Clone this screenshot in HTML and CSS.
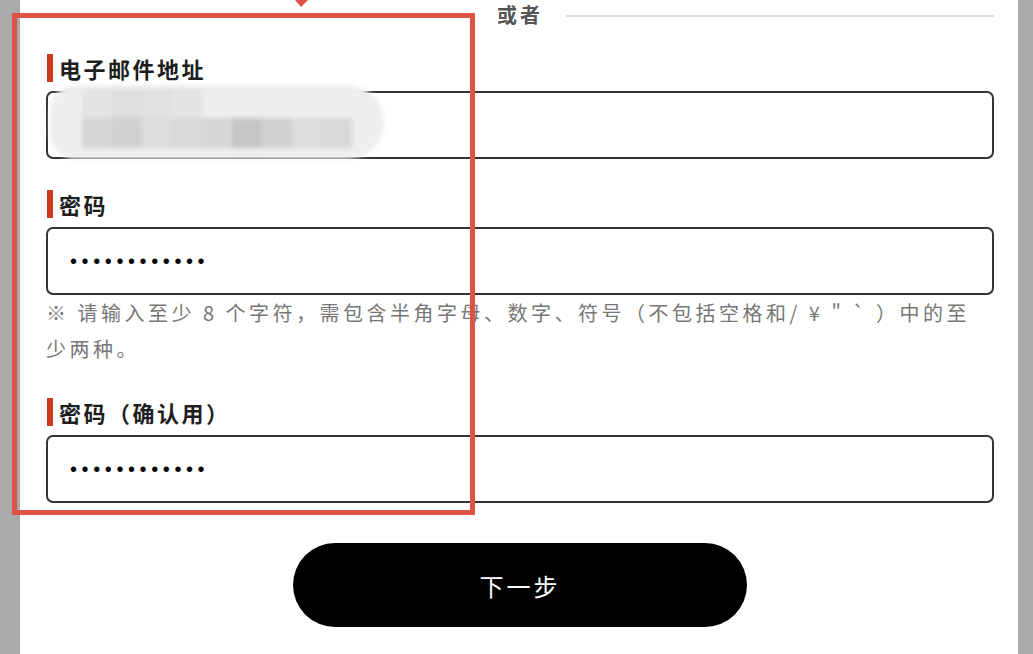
FILE: index.html
```html
<!DOCTYPE html>
<html lang="zh-CN">
<head>
<meta charset="utf-8">
<title>注册</title>
<link rel="stylesheet" href="styles.css">
</head>
<body>
<div class="panel">
  <div class="divider">
    <span class="line"></span>
    <span class="or">或者</span>
    <span class="line"></span>
  </div>

  <div class="field first">
    <div class="label">电子邮件地址</div>
    <div class="box">
      <div class="blur">
        <div class="blob"></div>
        <div class="px row1">
          <span class="c1"></span><span class="c2"></span><span class="c3"></span><span class="c4"></span>
        </div>
        <div class="px row2">
          <span class="c2"></span><span class="c3"></span><span class="c1"></span><span class="c4"></span><span class="c2"></span><span class="c5"></span><span class="c3"></span><span class="c1"></span><span class="c4"></span>
        </div>
      </div>
    </div>
  </div>

  <div class="field">
    <div class="label">密码</div>
    <div class="box"><span class="dots">••••••••••••</span></div>
    <p class="help">※ 请输入至少 8 个字符，需包含半角字母、数字、符号（不包括空格和/ ¥ " ` ）中的至少两种。</p>
  </div>

  <div class="field after-help">
    <div class="label">密码（确认用）</div>
    <div class="box"><span class="dots">••••••••••••</span></div>
  </div>

  <div class="actions">
    <button class="next" type="button">下一步</button>
  </div>

  <div class="annot"></div>
  <svg class="arrow" width="20" height="10" viewBox="0 0 20 10"><polygon points="3,0 16,0 9,7" fill="#de5444"/></svg>
</div>
</body>
</html>
```

FILE: styles.css
```css
* { box-sizing: border-box; }

html, body {
  margin: 0;
  padding: 0;
  background: #aaaaaa;
  height: 100%;
  overflow: hidden;
}

body {
  font-family: "Noto Sans CJK SC", "Noto Sans", "Liberation Sans", sans-serif;
  color: #222;
}

.panel {
  position: relative;
  margin-left: 20px;
  width: 998px;
  height: 654px;
  background: #fff;
  padding: 0 24px 0 26px;
}

.divider {
  height: 32px;
  display: flex;
  align-items: center;
  gap: 23px;
}

.divider .line {
  flex: 1;
  height: 2px;
  background: #dddddd;
}

.divider .or {
  font-size: 20px;
  font-weight: 700;
  color: #555;
  letter-spacing: 3px;
  line-height: 1;
  margin-top: -2px;
}

.field { margin-top: 31px; }
.field.first { margin-top: 22px; }
.field.after-help { margin-top: 31px; }

.label {
  display: flex;
  align-items: center;
  gap: 6px;
  height: 28px;
  font-size: 22px;
  font-weight: 700;
  letter-spacing: 2.5px;
  color: #1e1e1e;
  margin-bottom: 9px;
  margin-left: 1px;
  line-height: 28px;
}

.label::before {
  content: "";
  width: 6px;
  height: 28px;
  background: #cc3a1f;
  flex: none;
}

.box {
  position: relative;
  height: 68px;
  border: 2px solid #333;
  border-radius: 7px;
  background: #fff;
  display: flex;
  align-items: center;
  padding-left: 22px;
}

.dots {
  font-family: "Liberation Sans", sans-serif;
  font-size: 20px;
  letter-spacing: 4.6px;
  color: #000;
  line-height: 1;
}

.help {
  margin: 0;
  padding-right: 20px;
  font-size: 20px;
  line-height: 36px;
  letter-spacing: 3.5px;
  color: #777;
}

.blur {
  position: absolute;
  left: 2px;
  top: -8px;
  width: 334px;
  height: 74px;
  filter: blur(2px);
}

.blob {
  position: absolute;
  inset: 0;
  background: #eeeeee;
  border-radius: 26px 38px 38px 26px;
}

.px {
  position: absolute;
  display: flex;
}

.px span {
  width: 30px;
  height: 30px;
}

.row1 { left: 32px; top: 4px; }
.row1 span { background: #e4e4e4; }
.row1 .c2 { background: #dedede; }
.row1 .c3 { background: #e1e1e1; }

.row2 { left: 32px; top: 33px; }

.c1 { background: #dcdcdc; }
.c2 { background: #d6d6d6; }
.c3 { background: #d1d1d1; }
.c4 { background: #d9d9d9; }
.c5 { background: #c6c6c6; }

.actions {
  display: flex;
  justify-content: center;
  margin-top: 40px;
}

.next {
  width: 454px;
  height: 84px;
  border: none;
  border-radius: 42px;
  background: #000;
  color: #fff;
  font-family: "Noto Sans CJK SC", sans-serif;
  font-size: 24px;
  letter-spacing: 3px;
  cursor: pointer;
}

.annot {
  position: absolute;
  left: -8px;
  top: 13px;
  width: 463px;
  height: 502px;
  border: 5px solid #de5444;
  pointer-events: none;
}

.arrow {
  position: absolute;
  left: 272px;
  top: 0;
}
```
